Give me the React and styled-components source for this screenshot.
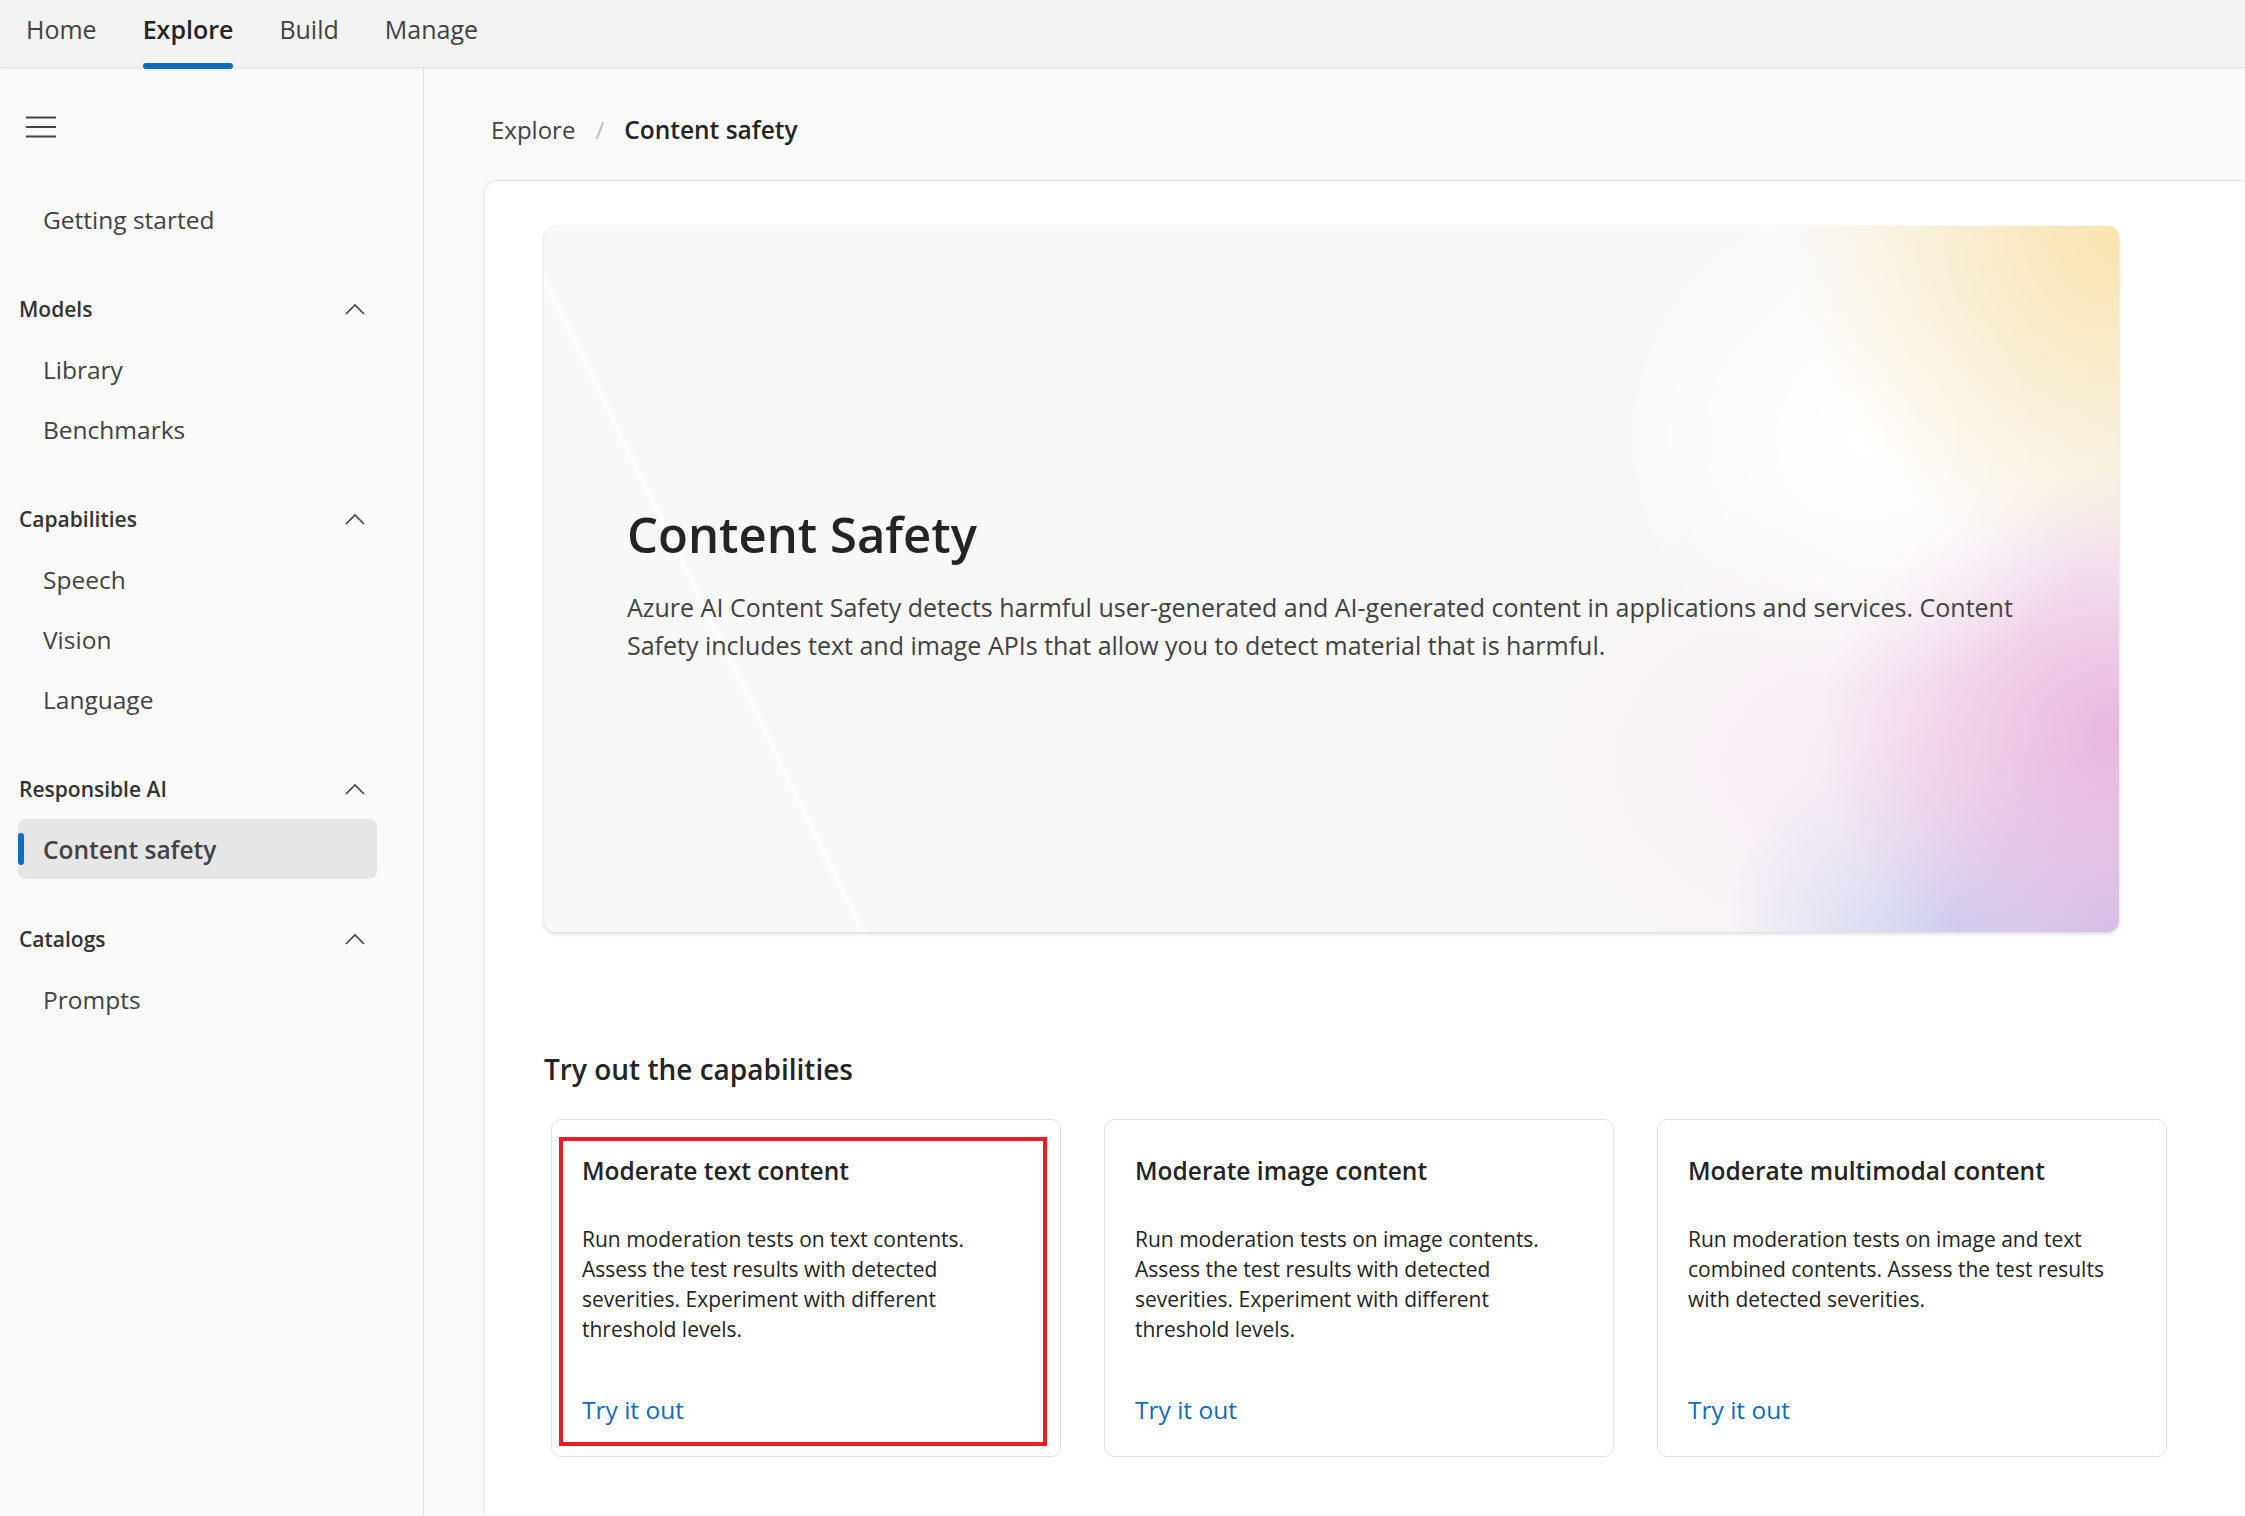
import React from 'react';
import styled, { createGlobalStyle } from 'styled-components';

const tabs = ['Home', 'Explore', 'Build', 'Manage'];

const navGroups = [
  { title: 'Models', items: ['Library', 'Benchmarks'] },
  { title: 'Capabilities', items: ['Speech', 'Vision', 'Language'] },
  { title: 'Responsible AI', items: ['Content safety'] },
  { title: 'Catalogs', items: ['Prompts'] },
];

const cards = [
  {
    title: 'Moderate text content',
    text: 'Run moderation tests on text contents. Assess the test results with detected severities. Experiment with different threshold levels.',
    marked: true,
  },
  {
    title: 'Moderate image content',
    text: 'Run moderation tests on image contents. Assess the test results with detected severities. Experiment with different threshold levels.',
  },
  {
    title: 'Moderate multimodal content',
    text: 'Run moderation tests on image and text combined contents. Assess the test results with detected severities.',
  },
];

const Hamburger = () => (
  <svg width="30" height="22" viewBox="0 0 30 22">
    <g stroke="#424242" strokeWidth="2">
      <line x1="0" y1="1.5" x2="30" y2="1.5" />
      <line x1="0" y1="11" x2="30" y2="11" />
      <line x1="0" y1="20.5" x2="30" y2="20.5" />
    </g>
  </svg>
);

const ChevronUp = () => (
  <svg width="20" height="12" viewBox="0 0 20 12">
    <polyline points="1,11 10,2 19,11" fill="none" stroke="#424242" strokeWidth="1.6" />
  </svg>
);

const App = () => {
  const active = 'Content safety';

  return (
    <>
      <GlobalStyle />
      <Page>
        {/* top tabs */}
        <TopBar>
          {tabs.map((t) => (
            <Tab key={t} $active={t === 'Explore'}>
              {t}
            </Tab>
          ))}
        </TopBar>

        <Body>
          {/* left nav */}
          <Sidebar>
            <MenuButton>
              <Hamburger />
            </MenuButton>
            <NavItem>Getting started</NavItem>
            {navGroups.map((g) => (
              <Group key={g.title}>
                <GroupHeader>
                  <span>{g.title}</span>
                  <ChevronUp />
                </GroupHeader>
                {g.items.map((item) => (
                  <NavItem key={item} $active={item === active}>
                    {item}
                  </NavItem>
                ))}
              </Group>
            ))}
          </Sidebar>

          {/* main */}
          <Main>
            <Breadcrumb>
              <Crumb>Explore</Crumb>
              <Slash>/</Slash>
              <Crumb $current>Content safety</Crumb>
            </Breadcrumb>

            <Panel>
              <Hero>
                <HeroTitle>Content Safety</HeroTitle>
                <HeroText>
                  Azure AI Content Safety detects harmful user-generated and AI-generated content in
                  applications and services. Content Safety includes text and image APIs that allow
                  you to detect material that is harmful.
                </HeroText>
              </Hero>

              <SectionTitle>Try out the capabilities</SectionTitle>
              <CardRow>
                {cards.map((c) => (
                  <Card key={c.title}>
                    {c.marked && <Marker />}
                    <CardTitle>{c.title}</CardTitle>
                    <CardText>{c.text}</CardText>
                    <TryLink href="#">Try it out</TryLink>
                  </Card>
                ))}
              </CardRow>
            </Panel>
          </Main>
        </Body>
      </Page>
    </>
  );
};

const GlobalStyle = createGlobalStyle`
  html, body {
    margin: 0;
    padding: 0;
  }
  body {
    font-family: "Open Sans", "Noto Sans", sans-serif;
    background: #fafafa;
    color: #242424;
  }
`;

const Page = styled.div`
  height: 100vh;
  display: flex;
  flex-direction: column;
  overflow: hidden;
`;

const TopBar = styled.nav`
  height: 67px;
  flex-shrink: 0;
  display: flex;
  align-items: flex-start;
  padding-left: 3px;
  background: #f3f3f3;
  border-bottom: 1px solid #e3e3e3;
  box-shadow: 0 1px 3px rgba(0, 0, 0, 0.05);
  position: relative;
  z-index: 1;
`;

const Tab = styled.div`
  position: relative;
  padding: 12px 23px 0;
  font-size: 25px;
  line-height: 34px;
  color: ${(p) => (p.$active ? '#242424' : '#424242')};
  font-weight: ${(p) => (p.$active ? 600 : 400)};

  &::after {
    content: '';
    display: ${(p) => (p.$active ? 'block' : 'none')};
    position: absolute;
    left: 23px;
    right: 23px;
    top: 63px;
    height: 6px;
    border-radius: 3px;
    background: #0f6cbd;
  }
`;

const Body = styled.div`
  flex: 1;
  display: flex;
  min-height: 0;
`;

const Sidebar = styled.aside`
  width: 424px;
  flex-shrink: 0;
  box-sizing: border-box;
  padding: 37px 46px 0 18px;
  border-right: 1px solid #e0e0e0;
  background: #fafafa;
`;

const MenuButton = styled.div`
  height: 44px;
  display: flex;
  align-items: center;
  padding-left: 8px;
  margin-bottom: 40px;
`;

const Group = styled.div`
  margin-top: 30px;
`;

const GroupHeader = styled.div`
  height: 60px;
  display: flex;
  align-items: center;
  justify-content: space-between;
  padding: 0 12px 0 1px;
  font-size: 21px;
  font-weight: 600;
  color: #333333;
`;

const NavItem = styled.div`
  position: relative;
  height: 60px;
  display: flex;
  align-items: center;
  padding-left: 25px;
  border-radius: 8px;
  font-size: 24.5px;
  color: #424242;
  background: ${(p) => (p.$active ? '#e6e6e6' : 'transparent')};
  font-weight: ${(p) => (p.$active ? 600 : 400)};

  &::before {
    content: '';
    display: ${(p) => (p.$active ? 'block' : 'none')};
    position: absolute;
    left: 0;
    top: 14px;
    width: 6px;
    height: 32px;
    border-radius: 3px;
    background: #0f6cbd;
  }
`;

const Main = styled.main`
  flex: 1;
  display: flex;
  flex-direction: column;
  padding-left: 60px;
  min-width: 0;
`;

const Breadcrumb = styled.div`
  display: flex;
  align-items: center;
  gap: 20px;
  margin: 45px 0 33px 7px;
  line-height: 34px;
`;

const Crumb = styled.span`
  font-size: ${(p) => (p.$current ? '24.5px' : '24px')};
  color: ${(p) => (p.$current ? '#242424' : '#424242')};
  font-weight: ${(p) => (p.$current ? 600 : 400)};
`;

const Slash = styled.span`
  font-size: 24px;
  color: #bdbdbd;
`;

const Panel = styled.section`
  flex: 1;
  background: #ffffff;
  border: 1px solid #e6e6e6;
  border-right: none;
  border-bottom: none;
  border-top-left-radius: 14px;
  box-shadow: 0 0 4px rgba(0, 0, 0, 0.05);
  padding: 45px 0 40px 59px;
`;

const Hero = styled.div`
  width: 1575px;
  height: 706px;
  box-sizing: border-box;
  display: flex;
  flex-direction: column;
  justify-content: center;
  padding: 8px 83px 0;
  border-radius: 12px;
  box-shadow: 0 2px 4px rgba(0, 0, 0, 0.14), 0 0 2px rgba(0, 0, 0, 0.06);
  background:
    linear-gradient(64deg, transparent 16.35%, rgba(255, 255, 255, 0.7) 16.6%, transparent 16.85%),
    radial-gradient(ellipse 21% 50% at 100% 0%, rgba(250, 226, 170, 0.95), rgba(250, 226, 170, 0) 100%),
    radial-gradient(ellipse 16% 36% at 84% 30%, rgba(255, 255, 255, 1), rgba(255, 255, 255, 0) 100%),
    radial-gradient(ellipse 19% 38% at 100% 72%, rgba(230, 172, 218, 0.85), rgba(230, 172, 218, 0) 100%),
    radial-gradient(ellipse 30% 40% at 88% 76%, rgba(248, 228, 242, 0.7), rgba(248, 228, 242, 0) 100%),
    radial-gradient(ellipse 14% 30% at 100% 100%, rgba(198, 184, 232, 0.95), rgba(198, 184, 232, 0) 100%),
    radial-gradient(ellipse 15% 30% at 90% 100%, rgba(184, 200, 240, 1), rgba(184, 200, 240, 0) 100%),
    #f8f8f8;
`;

const HeroTitle = styled.h1`
  margin: 0;
  font-size: 49px;
  line-height: 64px;
  font-weight: 600;
  color: #242424;
`;

const HeroText = styled.p`
  margin: 22px 0 0;
  max-width: 1420px;
  font-size: 25px;
  line-height: 38px;
  color: #424242;
`;

const SectionTitle = styled.h2`
  margin: 117px 0 30px;
  font-size: 28px;
  line-height: 40px;
  font-weight: 600;
  color: #242424;
`;

const CardRow = styled.div`
  display: grid;
  grid-template-columns: repeat(3, 510px);
  gap: 43px;
  margin-left: 7px;
`;

const Card = styled.div`
  position: relative;
  height: 338px;
  box-sizing: border-box;
  display: flex;
  flex-direction: column;
  padding: 34px 40px 29px 30px;
  border: 1px solid #e0e0e0;
  border-radius: 10px;
  background: #ffffff;
`;

const Marker = styled.div`
  position: absolute;
  top: 17px;
  left: 7px;
  right: 13px;
  bottom: 10px;
  border: 4px solid #ea1c24;
  pointer-events: none;
`;

const CardTitle = styled.h3`
  margin: 0;
  font-size: 24.5px;
  line-height: 34px;
  font-weight: 600;
  color: #242424;
`;

const CardText = styled.p`
  margin: 36px 0 0;
  font-size: 21px;
  line-height: 30px;
  color: #242424;
`;

const TryLink = styled.a`
  margin-top: auto;
  font-size: 24.5px;
  line-height: 34px;
  color: #0f6cbd;
  text-decoration: none;
`;

export default App;
